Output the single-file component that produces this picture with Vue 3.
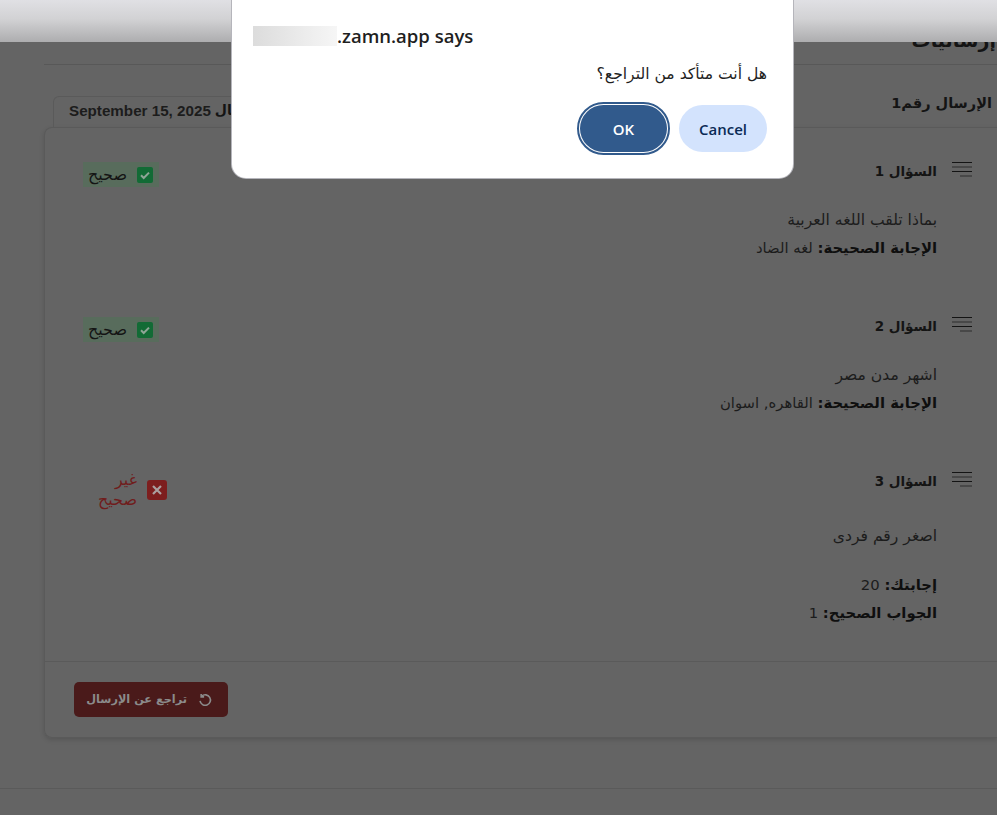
<template>
  <div class="screen">
    <div class="browser-bar"></div>

    <main class="page">
      <h1 class="page-title">إرساليات</h1>

      <div class="tabs">
        <h2 class="tab-title">الإرسال رقم1</h2>
        <div class="date-tab">
          <span class="date-label">تاريخ الإرسال</span>
          <span class="date-value">September 15, 2025</span>
        </div>
      </div>

      <section class="card">
        <div class="questions">
          <article v-for="q in questions" :key="q.number" class="question" :class="'q-' + q.number">
            <div class="q-head">
              <div class="q-title">
                <svg class="q-icon" width="20" height="16" viewBox="0 0 20 16">
                  <path d="M0 1.5h20M0 10.5h20" stroke="#141414" stroke-width="1.2" fill="none" />
                  <path d="M0 6h20M8 15h12" stroke="#2c2c2c" stroke-width="1.2" fill="none" />
                </svg>
                <span>السؤال {{ q.number }}</span>
              </div>
              <div class="badge" :class="q.correct ? 'ok' : 'bad'">
                <svg v-if="q.correct" class="badge-icon" viewBox="0 0 16 16">
                  <rect width="16" height="16" rx="2" fill="#126b35" />
                  <path d="M4 8.3l2.7 2.7L12 5.6" stroke="#8fa596" stroke-width="2" fill="none" />
                </svg>
                <svg v-else class="badge-icon" viewBox="0 0 20 20">
                  <rect width="20" height="20" rx="3" fill="#7d1e1e" />
                  <path d="M6 6l8 8M14 6l-8 8" stroke="#aaa0a0" stroke-width="2.2" fill="none" />
                </svg>
                <span class="badge-text">{{ q.correct ? 'صحيح' : 'غير صحيح' }}</span>
              </div>
            </div>
            <p class="q-text">{{ q.text }}</p>
            <p v-for="a in q.answers" :key="a.label" class="q-answer">
              <strong>{{ a.label }}:</strong> {{ a.value }}
            </p>
          </article>
        </div>
        <div class="card-foot">
          <button class="undo-btn">
            <svg class="undo-icon" width="14" height="14" viewBox="0 0 16 16" fill="none" stroke="#8b8b8b" stroke-width="1.8">
              <path d="M4.2 3.6A6 6 0 1 1 2.3 9" />
              <path d="M3.6 1v3.4H7" />
            </svg>
            <span>تراجع عن الإرسال</span>
          </button>
        </div>
      </section>

      <div class="page-foot"></div>
    </main>

    <div class="dialog">
      <div class="dialog-title"><span class="blur-host"></span>.zamn.app says</div>
      <div class="dialog-msg">هل أنت متأكد من التراجع؟</div>
      <div class="dialog-actions">
        <button class="btn-ok">OK</button>
        <button class="btn-cancel">Cancel</button>
      </div>
    </div>
  </div>
</template>

<script setup>
const questions = [
  {
    number: 1,
    correct: true,
    text: 'بماذا تلقب اللغه العربية',
    answers: [{ label: 'الإجابة الصحيحة', value: 'لغه الضاد' }]
  },
  {
    number: 2,
    correct: true,
    text: 'اشهر مدن مصر',
    answers: [{ label: 'الإجابة الصحيحة', value: 'القاهره, اسوان' }]
  },
  {
    number: 3,
    correct: false,
    text: 'اصغر رقم فردى',
    answers: [
      { label: 'إجابتك', value: '20' },
      { label: 'الجواب الصحيح', value: '1' }
    ]
  }
]
</script>

<style>
html, body {
  margin: 0;
  background: #646464;
  overflow: hidden;
}
</style>

<style scoped>
.screen {
  position: relative;
  height: 815px;
  overflow: hidden;
  background: #646464;
  font-family: "DejaVu Sans", "Noto Sans", sans-serif;
  color: #141414;
}

.browser-bar {
  position: absolute;
  top: 0;
  left: 0;
  right: 0;
  height: 42px;
  background: linear-gradient(180deg, #e0e0e4 0%, #d2d2d4 45%, #adadaf 100%);
  z-index: 2;
}

.page {
  direction: rtl;
  padding-left: 44px;
}

.page-title {
  margin: 0;
  height: 65px;
  box-sizing: border-box;
  padding: 28px 1px 0 0;
  font-size: 19px;
  font-weight: 600;
  line-height: 24px;
  border-bottom: 1px solid #585858;
}

.tabs {
  display: flex;
  justify-content: space-between;
  align-items: flex-end;
  height: 62px;
  padding: 0 5px 0 0;
}

.tab-title {
  margin: 0 0 12px;
  font-size: 14.5px;
  font-weight: 700;
  line-height: 24px;
}

.date-tab {
  display: flex;
  align-items: center;
  gap: 4px;
  height: 31px;
  margin-left: 9px;
  padding: 0 15px 4px;
  box-sizing: border-box;
  border: 1px solid #5a5a5a;
  border-bottom: 0;
  border-radius: 6px 6px 0 0;
  font-size: 14px;
  font-weight: 600;
  white-space: nowrap;
}

.date-value {
  font-family: "Liberation Sans", sans-serif;
  font-weight: 700;
  font-size: 15.2px;
  color: #1c1c1c;
}

.card {
  border: 1px solid #5a5a5a;
  border-right: 0;
  border-radius: 8px 0 0 8px;
  box-shadow: 0 2px 5px rgba(0, 0, 0, 0.14);
}

.questions {
  height: 533px;
  padding: 31px 60px 0 38px;
  box-sizing: border-box;
}

.question {
  font-size: 14.8px;
}

.q-head {
  display: flex;
  justify-content: space-between;
  align-items: flex-start;
}

.q-title {
  display: flex;
  align-items: center;
  gap: 15px;
  margin-right: -35px;
  font-weight: 700;
  font-size: 13.5px;
  line-height: 24px;
}

.q-icon {
  flex: none;
  margin-top: -4px;
}

.q-text {
  margin: 19px 0 0;
  font-size: 15.6px;
  line-height: 28px;
  color: #1c1c1c;
}

.q-answer {
  margin: 0;
  line-height: 28px;
  color: #1c1c1c;
}

.q-answer strong {
  color: #0f0f0f;
}

.q-1,
.q-2 {
  height: 155px;
}

.q-3 .q-text {
  margin-top: 12px;
}

.q-3 .q-text + .q-answer {
  margin-top: 21px;
}

.badge {
  display: flex;
  align-items: center;
  gap: 10px;
  font-size: 16px;
  line-height: 20px;
}

.badge.ok {
  box-sizing: border-box;
  width: 76px;
  height: 25px;
  padding: 0 6px 0 5px;
  margin-top: 3px;
  background: #586c5c;
}

.badge.bad {
  width: 68px;
  margin-left: 16px;
  margin-top: 1px;
  color: #701c1c;
}

.badge.ok .badge-icon {
  width: 16px;
  height: 16px;
  flex: none;
}

.badge.bad .badge-icon {
  width: 20px;
  height: 20px;
  flex: none;
}

.card-foot {
  box-sizing: border-box;
  display: flex;
  justify-content: flex-end;
  height: 76px;
  padding: 20px 0 0 29px;
  border-top: 1px solid #5a5a5a;
}

.undo-btn {
  display: flex;
  align-items: center;
  gap: 11px;
  height: 35px;
  width: 154px;
  padding: 0 16px 0 0;
  border: 0;
  border-radius: 5px;
  background: #4a1a1a;
  color: #8b8b8b;
  font-family: inherit;
  font-size: 11.3px;
  font-weight: 700;
  direction: rtl;
  white-space: nowrap;
}

.undo-icon {
  flex: none;
}

.page-foot {
  margin-top: 50px;
  margin-left: -44px;
  border-top: 1px solid #5a5a5a;
}

.dialog {
  position: absolute;
  top: -20px;
  left: 232px;
  width: 561px;
  height: 198px;
  box-sizing: border-box;
  padding: 46px 26px 0 21px;
  background: #fff;
  border-radius: 14px;
  box-shadow: 0 0 0 1px #b5b5bb;
  font-family: "Open Sans", "Noto Sans", sans-serif;
  z-index: 3;
}

.dialog-title {
  display: flex;
  align-items: center;
  height: 20px;
  font-size: 18.5px;
  font-weight: 600;
  color: #1f1f1f;
  line-height: 20px;
}

.blur-host {
  width: 84px;
  height: 20px;
  background: linear-gradient(90deg, #dcdcdc, #f6f6f6);
}

.dialog-msg {
  direction: rtl;
  margin-top: 18px;
  height: 20px;
  font-family: "DejaVu Sans", sans-serif;
  font-size: 15.6px;
  line-height: 20px;
  color: #1f1f1f;
}

.dialog-actions {
  display: flex;
  justify-content: flex-end;
  align-items: center;
  gap: 12px;
  margin-top: 21px;
}

.dialog-actions button {
  height: 47px;
  border: 0;
  border-radius: 24px;
  font-family: inherit;
  font-size: 15px;
  font-weight: 600;
}

.btn-ok {
  width: 87px;
  background: #315a8c;
  color: #fff;
  outline: 2.5px solid #315a8c;
  outline-offset: 1.5px;
}

.btn-cancel {
  width: 88px;
  background: #d3e3fd;
  color: #0a2a55;
}
</style>
